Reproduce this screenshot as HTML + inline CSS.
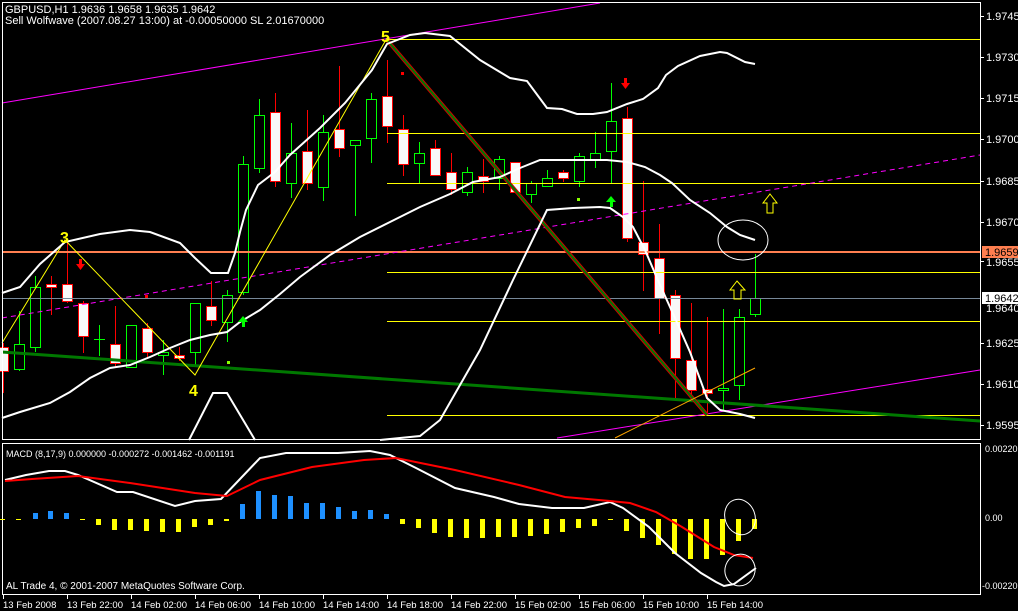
<!DOCTYPE html>
<html><head><meta charset="utf-8"><style>
html,body{margin:0;padding:0;background:#000;width:1018px;height:611px;overflow:hidden}
svg{display:block}
text{font-family:"Liberation Sans",sans-serif;fill:#fff}
</style></head><body>
<svg width="1018" height="611" viewBox="0 0 1018 611" xmlns="http://www.w3.org/2000/svg">
<rect width="1018" height="611" fill="#000"/>
<!-- candles -->
<g stroke-width="1" shape-rendering="crispEdges">
<g stroke="#f00" fill="#f8f8f8">
<line x1="3.5" y1="343" x2="3.5" y2="393"/><rect x="-1.5" y="347.5" width="10" height="24"/>
<line x1="51.5" y1="276" x2="51.5" y2="315"/><rect x="46.5" y="284.5" width="10" height="3"/>
<line x1="67.5" y1="241" x2="67.5" y2="303"/><rect x="62.5" y="284.5" width="10" height="17"/>
<line x1="83.5" y1="301" x2="83.5" y2="353"/><rect x="78.5" y="303.5" width="10" height="33"/>
<line x1="115.5" y1="306" x2="115.5" y2="367"/><rect x="110.5" y="344.5" width="10" height="19"/>
<line x1="147.5" y1="323" x2="147.5" y2="359"/><rect x="142.5" y="328.5" width="10" height="24"/>
<line x1="179.5" y1="347" x2="179.5" y2="361"/><rect x="174.5" y="355.5" width="10" height="3"/>
<line x1="211.5" y1="281" x2="211.5" y2="326"/><rect x="206.5" y="306.5" width="10" height="14"/>
<line x1="275.5" y1="93" x2="275.5" y2="187"/><rect x="270.5" y="112.5" width="10" height="69"/>
<line x1="307.5" y1="110" x2="307.5" y2="190"/><rect x="302.5" y="151.5" width="10" height="32"/>
<line x1="339.5" y1="66" x2="339.5" y2="157"/><rect x="334.5" y="129.5" width="10" height="19"/>
<line x1="387.5" y1="60" x2="387.5" y2="143"/><rect x="382.5" y="96.5" width="10" height="30"/>
<line x1="403.5" y1="115" x2="403.5" y2="176"/><rect x="398.5" y="129.5" width="10" height="35"/>
<line x1="435.5" y1="140" x2="435.5" y2="175"/><rect x="430.5" y="148.5" width="10" height="27"/>
<line x1="451.5" y1="153" x2="451.5" y2="195"/><rect x="446.5" y="172.5" width="10" height="17"/>
<line x1="483.5" y1="159" x2="483.5" y2="193"/><rect x="478.5" y="176.5" width="10" height="5"/>
<line x1="515.5" y1="162" x2="515.5" y2="193"/><rect x="510.5" y="162.5" width="10" height="30"/>
<line x1="563.5" y1="170" x2="563.5" y2="182"/><rect x="558.5" y="172.5" width="10" height="6"/>
<line x1="627.5" y1="107" x2="627.5" y2="242"/><rect x="622.5" y="118.5" width="10" height="120"/>
<line x1="643.5" y1="181" x2="643.5" y2="291"/><rect x="638.5" y="242.5" width="10" height="12"/>
<line x1="659.5" y1="224" x2="659.5" y2="334"/><rect x="654.5" y="258.5" width="10" height="40"/>
<line x1="675.5" y1="290" x2="675.5" y2="400"/><rect x="670.5" y="295.5" width="10" height="63"/>
<line x1="691.5" y1="303" x2="691.5" y2="400"/><rect x="686.5" y="360.5" width="10" height="30"/>
<line x1="707.5" y1="317" x2="707.5" y2="415"/><rect x="702.5" y="389.5" width="10" height="4"/>
</g>
<g stroke="#0f0" fill="#000">
<line x1="19.5" y1="311" x2="19.5" y2="371"/><rect x="14.5" y="344.5" width="10" height="25"/>
<line x1="35.5" y1="276" x2="35.5" y2="352"/><rect x="30.5" y="287.5" width="10" height="60"/>
<line x1="99.5" y1="325" x2="99.5" y2="356"/><line x1="94" y1="339.5" x2="105" y2="339.5"/>
<line x1="131.5" y1="325" x2="131.5" y2="367"/><rect x="126.5" y="325.5" width="10" height="42"/>
<line x1="163.5" y1="340" x2="163.5" y2="375"/><rect x="158.5" y="352.5" width="10" height="3"/>
<line x1="195.5" y1="303" x2="195.5" y2="366"/><rect x="190.5" y="303.5" width="10" height="49"/>
<line x1="227.5" y1="290" x2="227.5" y2="342"/><rect x="222.5" y="295.5" width="10" height="27"/>
<line x1="243.5" y1="156" x2="243.5" y2="295"/><rect x="238.5" y="164.5" width="10" height="128"/>
<line x1="259.5" y1="99" x2="259.5" y2="173"/><rect x="254.5" y="115.5" width="10" height="53"/>
<line x1="291.5" y1="123" x2="291.5" y2="198"/><rect x="286.5" y="153.5" width="10" height="30"/>
<line x1="323.5" y1="115" x2="323.5" y2="201"/><rect x="318.5" y="132.5" width="10" height="55"/>
<line x1="355.5" y1="140" x2="355.5" y2="216"/><rect x="350.5" y="140.5" width="10" height="5"/>
<line x1="371.5" y1="93" x2="371.5" y2="163"/><rect x="366.5" y="99.5" width="10" height="39"/>
<line x1="419.5" y1="142" x2="419.5" y2="183"/><rect x="414.5" y="153.5" width="10" height="10"/>
<line x1="467.5" y1="167" x2="467.5" y2="196"/><rect x="462.5" y="172.5" width="10" height="20"/>
<line x1="499.5" y1="156" x2="499.5" y2="190"/><rect x="494.5" y="159.5" width="10" height="19"/>
<line x1="531.5" y1="181" x2="531.5" y2="203"/><rect x="526.5" y="183.5" width="10" height="11"/>
<line x1="547.5" y1="170" x2="547.5" y2="186"/><rect x="542.5" y="178.5" width="10" height="8"/>
<line x1="579.5" y1="153" x2="579.5" y2="187"/><rect x="574.5" y="156.5" width="10" height="25"/>
<line x1="595.5" y1="132" x2="595.5" y2="168"/><rect x="590.5" y="153.5" width="10" height="7"/>
<line x1="611.5" y1="83" x2="611.5" y2="183"/><rect x="606.5" y="121.5" width="10" height="30"/>
<line x1="723.5" y1="309" x2="723.5" y2="411"/><rect x="718.5" y="388.5" width="10" height="2"/>
<line x1="739.5" y1="309" x2="739.5" y2="400"/><rect x="734.5" y="317.5" width="10" height="68"/>
<line x1="755.5" y1="254" x2="755.5" y2="317"/><rect x="750.5" y="298.5" width="10" height="16"/>
</g>
</g>
<!-- horizontal lines -->
<g stroke="#ff0" stroke-width="1" shape-rendering="crispEdges">
<line x1="387" y1="39.5" x2="980" y2="39.5"/>
<line x1="387" y1="133.5" x2="980" y2="133.5"/>
<line x1="387" y1="183.5" x2="980" y2="183.5"/>
<line x1="387" y1="272.5" x2="980" y2="272.5"/>
<line x1="387" y1="321.5" x2="980" y2="321.5"/>
<line x1="387" y1="415.5" x2="980" y2="415.5"/>
</g>
<line x1="2" y1="298.5" x2="980" y2="298.5" stroke="#778899" stroke-width="1"/>
<line x1="2" y1="252" x2="980" y2="252" stroke="#ff7f50" stroke-width="2"/>
<!-- magenta -->
<line x1="2" y1="103" x2="600" y2="3" stroke="#f0f" stroke-width="1"/>
<line x1="2" y1="318" x2="980" y2="155" stroke="#f0f" stroke-width="1" stroke-dasharray="5,4"/>
<line x1="557" y1="438" x2="980" y2="370" stroke="#f0f" stroke-width="1"/>
<!-- green thick -->
<line x1="2" y1="352" x2="980" y2="421" stroke="#007800" stroke-width="3"/>
<!-- red-green trend -->
<line x1="387" y1="40" x2="707" y2="415" stroke="#c00" stroke-width="4"/>
<line x1="387" y1="40" x2="707" y2="415" stroke="#007800" stroke-width="2"/>
<!-- yellow wave -->
<polyline points="2,343 65,240 195,375 387,38" fill="none" stroke="#ff0" stroke-width="1"/>
<line x1="615" y1="438" x2="755" y2="368" stroke="#ffa500" stroke-width="1"/>
<!-- bands -->
<g fill="none" stroke="#fff" stroke-width="2">
<polyline points="2,293 20,287 40,264 65,242 100,234 130,230 150,232 180,243 195,258 211,273 228,273 235,253 240,232 246,210 258,185 275,172 290,155 320,128 345,103 372,70 387,44 410,35 425,33 450,36 480,60 510,78 527,81 547,108 562,109 577,114 593,114 607,112 627,104 643,99 658,88 666,75 678,66 700,56 720,52 727,53 745,62 755,64"/>
<polyline points="2,418 20,412 50,403 70,392 90,378 110,368 130,365 150,357 170,348 190,340 210,335 227,332 240,322 260,310 280,294 300,277 330,255 360,237 390,222 420,207 450,194 473,182 500,177 520,168 540,160 573,160 607,160 627,162 645,167 660,175 672,183 690,200 710,213 727,227 740,235 755,240"/>
<polyline points="189,440 213,393 227,393 255,440"/>
<polyline points="380,440 420,436 440,420 480,350 513,280 547,210 573,208 600,207 610,208 623,217 633,227 645,250 660,285 675,318 690,352 707,398 720,410 740,414 755,418"/>
</g>
<ellipse cx="743" cy="240" rx="25" ry="20" fill="none" stroke="#fff" stroke-width="1"/>
<!-- arrows / markers -->
<g fill="#f00"><rect x="79" y="259" width="3" height="8"/><polygon points="76,264 85,264 80.5,270"/>
<rect x="624" y="78" width="3" height="8"/><polygon points="621,83 630,83 625.5,89"/>
<rect x="401" y="72" width="3" height="3"/><rect x="145" y="295" width="3" height="3"/></g>
<g fill="#0f0"><polygon points="238,322 243,316 248,322"/><rect x="242" y="320" width="3" height="7"/>
<polygon points="606,202 611,196 616,202"/><rect x="610" y="200" width="3" height="7"/></g>
<g fill="#8f0"><rect x="227" y="361" width="3" height="3"/><rect x="577" y="198" width="3" height="3"/></g>
<g fill="none" stroke="#ff0" stroke-width="1">
<polygon points="770,194 777,203 773,203 773,213 767,213 767,203 763,203"/>
<polygon points="737,281 745,290 741,290 741,299 734,299 734,290 730,290"/>
</g>
<g font-weight="bold" font-size="16" style="fill:#ff0"><text x="60" y="243" style="fill:#ff0">3</text><text x="189" y="396" style="fill:#ff0">4</text><text x="381" y="42" style="fill:#ff0">5</text></g>
<!-- frames -->
<g fill="none" stroke="#fff" stroke-width="1" shape-rendering="crispEdges">
<rect x="2.5" y="2.5" width="978" height="437"/>
<rect x="2.5" y="443.5" width="978" height="151"/>
</g>
<!-- price axis -->
<g font-size="11">
<g stroke="#fff" shape-rendering="crispEdges"><line x1="980" y1="16.5" x2="984" y2="16.5"/><line x1="980" y1="57.5" x2="984" y2="57.5"/><line x1="980" y1="98.5" x2="984" y2="98.5"/><line x1="980" y1="139.5" x2="984" y2="139.5"/><line x1="980" y1="181.5" x2="984" y2="181.5"/><line x1="980" y1="222.5" x2="984" y2="222.5"/><line x1="980" y1="261.5" x2="984" y2="261.5"/><line x1="980" y1="343.5" x2="984" y2="343.5"/><line x1="980" y1="384.5" x2="984" y2="384.5"/><line x1="980" y1="425.5" x2="984" y2="425.5"/></g>
<text x="986" y="20">1.9745</text><text x="986" y="61">1.9730</text><text x="986" y="102">1.9715</text><text x="986" y="143">1.9700</text><text x="986" y="185">1.9685</text><text x="986" y="226">1.9670</text><text x="986" y="266">1.9655</text><text x="986" y="312">1.9640</text><text x="986" y="347">1.9625</text><text x="986" y="388">1.9610</text><text x="986" y="429">1.9595</text>
<rect x="982" y="246" width="36" height="12" fill="#ff7f50"/><text x="985" y="256" style="fill:#000">1.9659</text>
<rect x="982" y="292" width="36" height="12" fill="#fff"/><text x="985" y="302" style="fill:#000">1.9642</text>
</g>
<text x="5" y="13" font-size="11">GBPUSD,H1  1.9636 1.9658 1.9635 1.9642</text>
<text x="5" y="24" font-size="11">Sell Wolfwave (2007.08.27 13:00) at -0.00050000 SL 2.01670000</text>
<!-- MACD -->
<g shape-rendering="crispEdges">
<g fill="#1e90ff">
<rect x="33" y="513" width="5" height="6"/><rect x="48" y="511" width="5" height="8"/><rect x="64" y="513" width="5" height="6"/>
<rect x="240" y="504" width="5" height="15"/><rect x="256" y="491" width="5" height="28"/><rect x="272" y="495" width="5" height="24"/><rect x="288" y="496" width="5" height="23"/><rect x="304" y="503" width="5" height="16"/><rect x="320" y="503" width="5" height="16"/><rect x="336" y="507" width="5" height="12"/><rect x="352" y="511" width="5" height="8"/><rect x="368" y="510" width="5" height="9"/><rect x="384" y="514" width="5" height="5"/>
</g>
<g fill="#ff0">
<rect x="0" y="519" width="5" height="1"/><rect x="16" y="519" width="5" height="1"/><rect x="80" y="519" width="5" height="1"/>
<rect x="96" y="519" width="5" height="6"/><rect x="112" y="519" width="5" height="11"/><rect x="128" y="519" width="5" height="11"/><rect x="144" y="519" width="5" height="12"/><rect x="160" y="519" width="5" height="13"/><rect x="176" y="519" width="5" height="13"/><rect x="192" y="519" width="5" height="8"/><rect x="208" y="519" width="5" height="6"/><rect x="224" y="519" width="5" height="2"/>
<rect x="400" y="519" width="5" height="5"/><rect x="416" y="519" width="5" height="9"/><rect x="432" y="519" width="5" height="14"/><rect x="448" y="519" width="5" height="18"/><rect x="464" y="519" width="5" height="19"/><rect x="480" y="519" width="5" height="19"/><rect x="496" y="519" width="5" height="18"/><rect x="512" y="519" width="5" height="18"/><rect x="528" y="519" width="5" height="17"/><rect x="544" y="519" width="5" height="15"/><rect x="560" y="519" width="5" height="13"/><rect x="576" y="519" width="5" height="9"/><rect x="592" y="519" width="5" height="7"/><rect x="608" y="519" width="5" height="1"/>
<rect x="624" y="519" width="5" height="12"/><rect x="640" y="519" width="5" height="19"/><rect x="656" y="519" width="5" height="26"/><rect x="672" y="519" width="5" height="35"/><rect x="688" y="519" width="5" height="40"/><rect x="704" y="519" width="5" height="40"/><rect x="720" y="519" width="5" height="36"/><rect x="736" y="519" width="5" height="22"/><rect x="752" y="519" width="5" height="10"/>
</g>
</g>
<polyline fill="none" stroke="#fff" stroke-width="2" points="5,480 26,475 49,471 65,471 78,475 117,492 133,492 175,506 195,501 221,499 260,458 286,453 312,453 338,453 370,451 390,455 416,468 455,488 494,497 519,504 552,508 584,508 610,502 623,508 649,527 675,553 701,573 716,582 724,586 734,584 756,568"/>
<polyline fill="none" stroke="#f00" stroke-width="2" points="5,481 32,479 78,476 130,483 195,493 227,496 260,480 312,467 364,460 396,458 455,470 519,485 565,497 610,501 630,503 656,512 682,527 714,547 734,555 753,558"/>
<ellipse cx="740" cy="517" rx="15" ry="18" transform="rotate(-20 740 517)" fill="none" stroke="#fff" stroke-width="1"/>
<ellipse cx="740" cy="570" rx="15" ry="16" transform="rotate(20 740 570)" fill="none" stroke="#fff" stroke-width="1"/>
<text x="6" y="457" font-size="9">MACD  (8,17,9) 0.000000 -0.000272 -0.001462 -0.001191</text>
<text x="6" y="589" font-size="10">AL Trade 4, © 2001-2007 MetaQuotes Software Corp.</text>
<g font-size="9"><text x="985" y="452">0.00220</text><text x="985" y="521">0.00</text><text x="982" y="589">-0.00220</text></g>
<!-- time axis -->
<g stroke="#fff" shape-rendering="crispEdges"><line x1="3.5" y1="595" x2="3.5" y2="599"/><line x1="67.5" y1="595" x2="67.5" y2="599"/><line x1="131.5" y1="595" x2="131.5" y2="599"/><line x1="195.5" y1="595" x2="195.5" y2="599"/><line x1="259.5" y1="595" x2="259.5" y2="599"/><line x1="323.5" y1="595" x2="323.5" y2="599"/><line x1="387.5" y1="595" x2="387.5" y2="599"/><line x1="451.5" y1="595" x2="451.5" y2="599"/><line x1="515.5" y1="595" x2="515.5" y2="599"/><line x1="579.5" y1="595" x2="579.5" y2="599"/><line x1="643.5" y1="595" x2="643.5" y2="599"/><line x1="707.5" y1="595" x2="707.5" y2="599"/></g>
<g font-size="9.5"><text x="3" y="608">13 Feb 2008</text><text x="67" y="608">13 Feb 22:00</text><text x="131" y="608">14 Feb 02:00</text><text x="195" y="608">14 Feb 06:00</text><text x="259" y="608">14 Feb 10:00</text><text x="323" y="608">14 Feb 14:00</text><text x="387" y="608">14 Feb 18:00</text><text x="451" y="608">14 Feb 22:00</text><text x="515" y="608">15 Feb 02:00</text><text x="579" y="608">15 Feb 06:00</text><text x="643" y="608">15 Feb 10:00</text><text x="707" y="608">15 Feb 14:00</text></g>
</svg>
</body></html>
